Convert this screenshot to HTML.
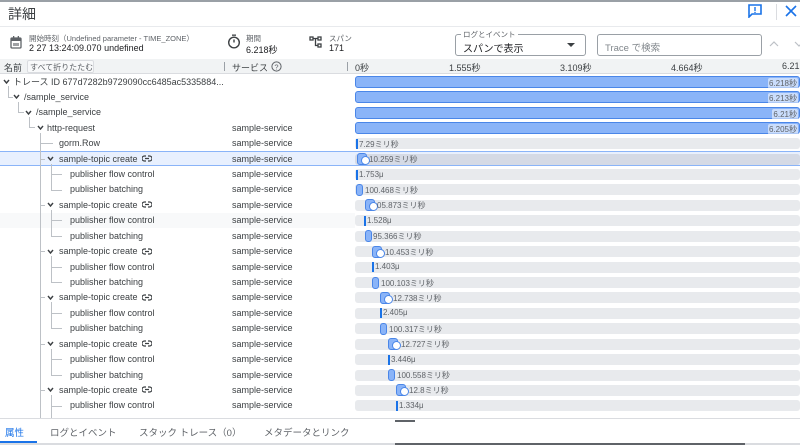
<!DOCTYPE html>
<html><head><meta charset="utf-8"><style>
*{margin:0;padding:0;box-sizing:border-box}
body{width:800px;height:445px;overflow:hidden;background:#fff;font-family:"Liberation Sans","Noto Sans CJK JP",sans-serif;color:#3c4043;position:relative;font-size:9px}
.a{position:absolute;white-space:nowrap}
.row{position:absolute;left:0;width:800px;height:15.4px}
.row .t{position:absolute;top:2.5px;font-size:9px;color:#3c4043;line-height:11px}
.row .s{position:absolute;left:232px;top:2.5px;line-height:11px}
.chev{position:absolute;top:4px;width:7px;height:7px}
.trk{position:absolute;left:355px;right:0;top:2.5px;height:11px;background:#e8eaed;border-radius:3px}
.blue{position:absolute;left:355px;right:0;top:2px;height:12px;background:#8ab4f8;border:1px solid #4a86e8;border-radius:3px}
.blue span{position:absolute;right:1px;top:1px;font-size:8px;color:#5f6368;background:rgba(255,255,255,.55);border-radius:2px;padding:0 1px}
.lbl{position:absolute;top:3px;font-size:8px;color:#5f6368}
.ln{position:absolute;width:2px;top:3px;height:10px;background:#1a73e8}
.pb{position:absolute;width:7px;top:2px;height:12px;background:#8ab4f8;border:1px solid #4a86e8;border-radius:3px}
.st{position:absolute;width:10px;top:2px;height:12px;background:#8ab4f8;border:1px solid #4a86e8;border-radius:3px}
.st:after{content:"";position:absolute;left:3px;top:2px;width:7px;height:7px;border-radius:50%;background:#fff;border:1px solid #4a86e8}
.vl{position:absolute;width:1px;background:#bdc1c6}
.hl{position:absolute;height:1px;background:#bdc1c6}
.lk{position:absolute;left:142px;top:4px}
</style></head><body>
<svg width="0" height="0" style="position:absolute"><defs><symbol id="lk" viewBox="0 0 10 7"><path d="M4 1H2.5a2.5 2.5 0 0 0 0 5H4M6 1h1.5a2.5 2.5 0 0 1 0 5H6M3 3.5h4" fill="none" stroke="#3c4043" stroke-width="1.2"/></symbol></defs></svg>
<div class="a" style="left:0;top:0;width:800px;height:2px;background:#9aa0a6"></div>
<div class="a" style="left:8px;top:4px;font-size:14px;color:#3c4043">詳細</div>
<svg class="a" style="left:747px;top:4px" width="16" height="14" viewBox="0 0 16 14"><path d="M2 1h12v9H5l-3 3z" fill="none" stroke="#1a73e8" stroke-width="1.6"/><rect x="7.3" y="3" width="1.4" height="4" fill="#1a73e8"/><rect x="7.3" y="7.8" width="1.4" height="1.2" fill="#1a73e8"/></svg>
<div class="a" style="left:776px;top:4px;width:1px;height:16px;background:#dadce0"></div>
<svg class="a" style="left:785px;top:5px" width="12" height="12"><path d="M1 1l10 10M11 1L1 11" stroke="#1a73e8" stroke-width="1.6"/></svg>
<div class="a" style="left:0;top:26px;width:800px;height:1px;background:#e8eaed"></div>
<svg class="a" style="left:10px;top:36px" width="12" height="13"><rect x="1" y="2" width="10" height="10" rx="1" fill="none" stroke="#5f6368" stroke-width="1.3"/><rect x="1" y="2" width="10" height="3" fill="#5f6368"/><rect x="3" y="0" width="1.3" height="3" fill="#5f6368"/><rect x="7.7" y="0" width="1.3" height="3" fill="#5f6368"/><rect x="3" y="7" width="6" height="3" fill="#5f6368" opacity=".6"/></svg>
<div class="a" style="left:29px;top:33px;font-size:7.5px;color:#5f6368">開始時刻（Undefined parameter - TIME_ZONE）</div>
<div class="a" style="left:29px;top:43px;font-size:9px;color:#202124">2 27 13:24:09.070 undefined</div>
<svg class="a" style="left:227px;top:34px" width="14" height="15"><rect x="5" y="0.5" width="4" height="1.3" fill="#3c4043"/><circle cx="7" cy="8.5" r="5.3" fill="none" stroke="#3c4043" stroke-width="1.4"/><path d="M7 8.5V5.5" stroke="#3c4043" stroke-width="1.4"/></svg>
<div class="a" style="left:246px;top:33px;font-size:7.5px;color:#5f6368">期間</div>
<div class="a" style="left:246px;top:43px;font-size:9px;color:#202124">6.218秒</div>
<svg class="a" style="left:309px;top:36px" width="14" height="12"><g fill="none" stroke="#3c4043" stroke-width="1.3"><rect x="1" y="1" width="3" height="3"/><rect x="9" y="1" width="3" height="3"/><rect x="9" y="8" width="3" height="3"/><path d="M4 2.5h5M6.5 2.5v7h2.5"/></g></svg>
<div class="a" style="left:329px;top:33px;font-size:7.5px;color:#5f6368">スパン</div>
<div class="a" style="left:329px;top:43px;font-size:9px;color:#202124">171</div>
<div class="a" style="left:455px;top:34px;width:131px;height:22px;border:1px solid #9aa0a6;border-radius:3px"></div>
<div class="a" style="left:461px;top:29px;font-size:7.5px;color:#5f6368;background:#fff;padding:0 2px">ログとイベント</div>
<div class="a" style="left:463px;top:40px;font-size:10px;color:#202124">スパンで表示</div>
<svg class="a" style="left:567px;top:43px" width="8" height="5"><path d="M0 0h8L4 4z" fill="#3c4043"/></svg>
<div class="a" style="left:597px;top:34px;width:165px;height:22px;border:1px solid #9aa0a6;border-radius:3px"></div>
<div class="a" style="left:605px;top:40px;font-size:9.5px;color:#80868b">Trace で検索</div>
<svg class="a" style="left:769px;top:41px" width="10" height="7"><path d="M1 5l4-4 4 4" fill="none" stroke="#bdc1c6" stroke-width="1.2"/></svg>
<svg class="a" style="left:794px;top:41px" width="10" height="7"><path d="M1 1l4 4 4-4" fill="none" stroke="#bdc1c6" stroke-width="1.2"/></svg>
<div class="a" style="left:0;top:59px;width:800px;height:15px;background:#f1f3f4;border-bottom:1px solid #dadce0"></div>
<div class="a" style="left:4px;top:61px;font-size:9px;color:#3c4043">名前</div>
<div class="a" style="left:27px;top:60px;width:67px;height:13px;border:1px solid #dadce0;border-radius:2px;background:#f8f9fa"></div>
<div class="a" style="left:30px;top:62px;font-size:8px;color:#5f6368">すべて折りたたむ</div>
<div class="a" style="left:224px;top:62px;width:1px;height:9px;background:#9aa0a6"></div>
<div class="a" style="left:232px;top:61px;font-size:9px">サービス</div>
<svg class="a" style="left:271px;top:61px" width="11" height="11"><circle cx="5.5" cy="5.5" r="4.6" fill="none" stroke="#5f6368" stroke-width="1"/><text x="5.5" y="8.3" font-size="7.5" text-anchor="middle" fill="#5f6368" font-family="Liberation Sans">?</text></svg>
<div class="a" style="left:347px;top:62px;width:1px;height:9px;background:#9aa0a6"></div>
<div class="a" style="left:355px;top:61px;font-size:9px">0秒</div>
<div class="a" style="left:449px;top:61px;font-size:9px">1.555秒</div>
<div class="a" style="left:560px;top:61px;font-size:9px">3.109秒</div>
<div class="a" style="left:671px;top:61px;font-size:9px">4.664秒</div>
<div class="a" style="left:782px;top:61px;font-size:9px">6.21</div>

<div class="a" style="left:0;top:151px;width:800px;height:15.4px;background:#e8f0fe;border-top:1px solid #8ab4f8;border-bottom:1px solid #8ab4f8"></div>
<div class="a" style="left:0;top:212.8px;width:355px;height:15.4px;background:#f8f9fa"></div>

<div class="vl" style="left:8px;top:86px;height:11px"></div><div class="hl" style="left:8px;top:97px;width:5px"></div>
<div class="vl" style="left:18px;top:102px;height:11px"></div><div class="hl" style="left:18px;top:112px;width:6px"></div>
<div class="vl" style="left:29px;top:117px;height:11px"></div><div class="hl" style="left:29px;top:127px;width:6px"></div>
<div class="vl" style="left:40px;top:133px;height:290px"></div>
<div class="hl" style="left:40px;top:143px;width:13px"></div>
<div class="hl" style="left:40px;top:159px;width:5px"></div>
<div class="hl" style="left:40px;top:205px;width:5px"></div>
<div class="hl" style="left:40px;top:251px;width:5px"></div>
<div class="hl" style="left:40px;top:297px;width:5px"></div>
<div class="hl" style="left:40px;top:344px;width:5px"></div>
<div class="hl" style="left:40px;top:390px;width:5px"></div>
<div class="vl" style="left:51px;top:164px;height:26px"></div><div class="hl" style="left:51px;top:174px;width:11px"></div><div class="hl" style="left:51px;top:190px;width:11px"></div>
<div class="vl" style="left:51px;top:210px;height:26px"></div><div class="hl" style="left:51px;top:220px;width:11px"></div><div class="hl" style="left:51px;top:236px;width:11px"></div>
<div class="vl" style="left:51px;top:256px;height:26px"></div><div class="hl" style="left:51px;top:267px;width:11px"></div><div class="hl" style="left:51px;top:282px;width:11px"></div>
<div class="vl" style="left:51px;top:302px;height:26px"></div><div class="hl" style="left:51px;top:313px;width:11px"></div><div class="hl" style="left:51px;top:328px;width:11px"></div>
<div class="vl" style="left:51px;top:349px;height:26px"></div><div class="hl" style="left:51px;top:359px;width:11px"></div><div class="hl" style="left:51px;top:375px;width:11px"></div>
<div class="vl" style="left:51px;top:395px;height:26px"></div><div class="hl" style="left:51px;top:406px;width:11px"></div>

<div class="row" style="top:74px"><svg class="chev" style="left:3px" viewBox="0 0 7 7"><path d="M1 2l2.5 3L6 2" fill="none" stroke="#3c4043" stroke-width="1.4"/></svg><span class="t" style="left:13px">トレース ID 677d7282b9729090cc6485ac5335884...</span><div class="blue"><span>6.218秒</span></div></div>
<div class="row" style="top:89.4px"><svg class="chev" style="left:13px" viewBox="0 0 7 7"><path d="M1 2l2.5 3L6 2" fill="none" stroke="#3c4043" stroke-width="1.4"/></svg><span class="t" style="left:24px">/sample_service</span><div class="blue"><span>6.213秒</span></div></div>
<div class="row" style="top:104.8px"><svg class="chev" style="left:25px" viewBox="0 0 7 7"><path d="M1 2l2.5 3L6 2" fill="none" stroke="#3c4043" stroke-width="1.4"/></svg><span class="t" style="left:36px">/sample_service</span><div class="blue"><span>6.21秒</span></div></div>
<div class="row" style="top:120.3px"><svg class="chev" style="left:37px" viewBox="0 0 7 7"><path d="M1 2l2.5 3L6 2" fill="none" stroke="#3c4043" stroke-width="1.4"/></svg><span class="t" style="left:47px">http-request</span><span class="s">sample-service</span><div class="blue"><span>6.205秒</span></div></div>
<div class="row" style="top:135.7px"><span class="t" style="left:59px">gorm.Row</span><span class="s">sample-service</span><div class="trk"></div><div class="ln" style="left:356px"></div><span class="lbl" style="left:359px">7.29ミリ秒</span></div>

<div class="row" style="top:151.1px"><svg class="chev" style="left:47px" viewBox="0 0 7 7"><path d="M1 2l2.5 3L6 2" fill="none" stroke="#3c4043" stroke-width="1.4"/></svg><span class="t" style="left:59px">sample-topic create</span><svg class="lk" width="10" height="7"><use href="#lk"/></svg><span class="s">sample-service</span><div class="trk" style="background:#d5dae5"></div><div class="st" style="left:357px"></div><span class="lbl" style="left:369px">10.259ミリ秒</span></div>
<div class="row" style="top:166.5px"><span class="t" style="left:70px">publisher flow control</span><span class="s">sample-service</span><div class="trk"></div><div class="ln" style="left:356px"></div><span class="lbl" style="left:359px">1.753μ</span></div>
<div class="row" style="top:181.9px"><span class="t" style="left:70px">publisher batching</span><span class="s">sample-service</span><div class="trk"></div><div class="pb" style="left:356px"></div><span class="lbl" style="left:365px">100.468ミリ秒</span></div>

<div class="row" style="top:197.4px"><svg class="chev" style="left:47px" viewBox="0 0 7 7"><path d="M1 2l2.5 3L6 2" fill="none" stroke="#3c4043" stroke-width="1.4"/></svg><span class="t" style="left:59px">sample-topic create</span><svg class="lk" width="10" height="7"><use href="#lk"/></svg><span class="s">sample-service</span><div class="trk"></div><div class="st" style="left:365px"></div><span class="lbl" style="left:377px">05.873ミリ秒</span></div>
<div class="row" style="top:212.8px"><span class="t" style="left:70px">publisher flow control</span><span class="s">sample-service</span><div class="trk"></div><div class="ln" style="left:364px"></div><span class="lbl" style="left:367px">1.528μ</span></div>
<div class="row" style="top:228.2px"><span class="t" style="left:70px">publisher batching</span><span class="s">sample-service</span><div class="trk"></div><div class="pb" style="left:365px"></div><span class="lbl" style="left:373px">95.366ミリ秒</span></div>

<div class="row" style="top:243.6px"><svg class="chev" style="left:47px" viewBox="0 0 7 7"><path d="M1 2l2.5 3L6 2" fill="none" stroke="#3c4043" stroke-width="1.4"/></svg><span class="t" style="left:59px">sample-topic create</span><svg class="lk" width="10" height="7"><use href="#lk"/></svg><span class="s">sample-service</span><div class="trk"></div><div class="st" style="left:372px"></div><span class="lbl" style="left:385px">10.453ミリ秒</span></div>
<div class="row" style="top:259px"><span class="t" style="left:70px">publisher flow control</span><span class="s">sample-service</span><div class="trk"></div><div class="ln" style="left:372px"></div><span class="lbl" style="left:375px">1.403μ</span></div>
<div class="row" style="top:274.5px"><span class="t" style="left:70px">publisher batching</span><span class="s">sample-service</span><div class="trk"></div><div class="pb" style="left:372px"></div><span class="lbl" style="left:381px">100.103ミリ秒</span></div>

<div class="row" style="top:289.9px"><svg class="chev" style="left:47px" viewBox="0 0 7 7"><path d="M1 2l2.5 3L6 2" fill="none" stroke="#3c4043" stroke-width="1.4"/></svg><span class="t" style="left:59px">sample-topic create</span><svg class="lk" width="10" height="7"><use href="#lk"/></svg><span class="s">sample-service</span><div class="trk"></div><div class="st" style="left:380px"></div><span class="lbl" style="left:393px">12.738ミリ秒</span></div>
<div class="row" style="top:305.3px"><span class="t" style="left:70px">publisher flow control</span><span class="s">sample-service</span><div class="trk"></div><div class="ln" style="left:380px"></div><span class="lbl" style="left:383px">2.405μ</span></div>
<div class="row" style="top:320.7px"><span class="t" style="left:70px">publisher batching</span><span class="s">sample-service</span><div class="trk"></div><div class="pb" style="left:380px"></div><span class="lbl" style="left:389px">100.317ミリ秒</span></div>

<div class="row" style="top:336.1px"><svg class="chev" style="left:47px" viewBox="0 0 7 7"><path d="M1 2l2.5 3L6 2" fill="none" stroke="#3c4043" stroke-width="1.4"/></svg><span class="t" style="left:59px">sample-topic create</span><svg class="lk" width="10" height="7"><use href="#lk"/></svg><span class="s">sample-service</span><div class="trk"></div><div class="st" style="left:388px"></div><span class="lbl" style="left:401px">12.727ミリ秒</span></div>
<div class="row" style="top:351.6px"><span class="t" style="left:70px">publisher flow control</span><span class="s">sample-service</span><div class="trk"></div><div class="ln" style="left:388px"></div><span class="lbl" style="left:391px">3.446μ</span></div>
<div class="row" style="top:367px"><span class="t" style="left:70px">publisher batching</span><span class="s">sample-service</span><div class="trk"></div><div class="pb" style="left:388px"></div><span class="lbl" style="left:397px">100.558ミリ秒</span></div>

<div class="row" style="top:382.4px"><svg class="chev" style="left:47px" viewBox="0 0 7 7"><path d="M1 2l2.5 3L6 2" fill="none" stroke="#3c4043" stroke-width="1.4"/></svg><span class="t" style="left:59px">sample-topic create</span><svg class="lk" width="10" height="7"><use href="#lk"/></svg><span class="s">sample-service</span><div class="trk"></div><div class="st" style="left:396px"></div><span class="lbl" style="left:409px">12.8ミリ秒</span></div>
<div class="row" style="top:397.8px"><span class="t" style="left:70px">publisher flow control</span><span class="s">sample-service</span><div class="trk"></div><div class="ln" style="left:396px"></div><span class="lbl" style="left:399px">1.334μ</span></div>

<div class="a" style="left:0;top:418px;width:800px;height:27px;background:#fff;border-top:1px solid #dadce0"></div>
<div class="a" style="left:395px;top:420px;width:20px;height:1.5px;background:#5f6368"></div>
<div class="a" style="left:5px;top:425px;font-size:9.5px;color:#1a73e8">属性</div>
<div class="a" style="left:0;top:441px;width:37px;height:2px;background:#1a73e8"></div>
<div class="a" style="left:50px;top:425px;font-size:9.5px;color:#5f6368">ログとイベント</div>
<div class="a" style="left:139px;top:425px;font-size:9.5px;color:#5f6368">スタック トレース（0）</div>
<div class="a" style="left:264px;top:425px;font-size:9.5px;color:#5f6368">メタデータとリンク</div>
<div class="a" style="left:0;top:443px;width:800px;height:2px;background:#dadce0"></div>
<div class="a" style="left:395px;top:443px;width:350px;height:2px;background:#5f6368"></div>
</body></html>
